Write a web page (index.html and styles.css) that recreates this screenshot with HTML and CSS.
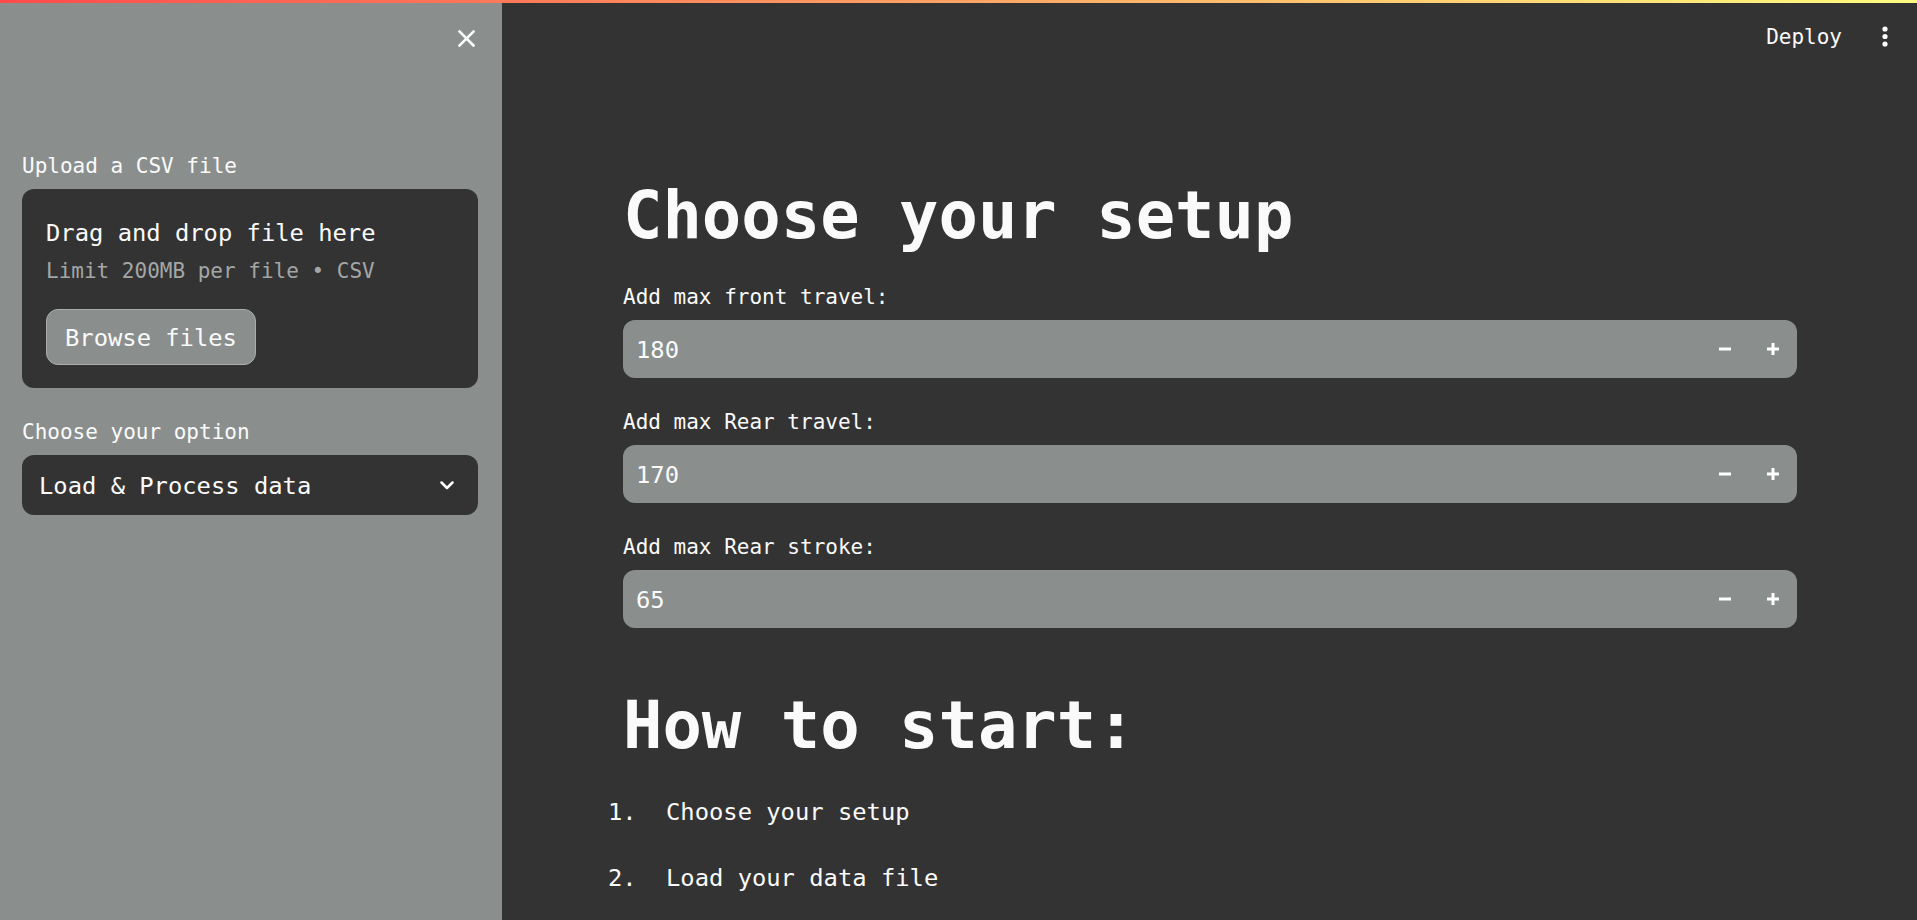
FILE: index.html
```html
<!DOCTYPE html>
<html lang="en">
<head>
<meta charset="utf-8">
<title>Choose your setup</title>
<link rel="stylesheet" href="styles.css">
</head>
<body>
<div class="decoration"></div>
<div class="app">
  <aside class="sidebar">
    <div class="sidebar-head">
      <svg class="close" width="17" height="17" viewBox="0 0 17 17"><path d="M1.5 1.5 L15.5 15.5 M15.5 1.5 L1.5 15.5" stroke="#fff" stroke-width="2.5" stroke-linecap="square" fill="none"/></svg>
    </div>
    <div class="field-label first">Upload a CSV file</div>
    <div class="dropzone">
      <div class="dz-title">Drag and drop file here</div>
      <div class="dz-sub">Limit 200MB per file • CSV</div>
      <button class="browse">Browse files</button>
    </div>
    <div class="field-label option">Choose your option</div>
    <div class="select">
      <span class="select-text">Load &amp; Process data</span>
      <svg width="14" height="9" viewBox="0 0 14 9"><path d="M1.5 1.5 L7 7 L12.5 1.5" stroke="#fff" stroke-width="2.5" fill="none" stroke-linecap="round" stroke-linejoin="round"/></svg>
    </div>
  </aside>
  <main class="main">
    <div class="toolbar">
      <button class="deploy">Deploy</button>
      <div class="kebab">
        <svg width="6" height="22" viewBox="0 0 6 22"><circle cx="3" cy="3" r="2.6" fill="#fff"/><circle cx="3" cy="10.5" r="2.6" fill="#fff"/><circle cx="3" cy="18" r="2.6" fill="#fff"/></svg>
      </div>
    </div>
    <div class="content">
      <h1>Choose your setup</h1>
      <div class="widget first">
        <div class="field-label">Add max front travel:</div>
        <div class="num-input">
          <span class="value">180</span>
          <span class="step"><svg width="12" height="12" viewBox="0 0 12 12"><rect x="0" y="4.5" width="12" height="3" fill="#fff"/></svg></span>
          <span class="step"><svg width="12" height="12" viewBox="0 0 12 12"><rect x="0" y="4.5" width="12" height="3" fill="#fff"/><rect x="4.5" y="0" width="3" height="12" fill="#fff"/></svg></span>
        </div>
      </div>
      <div class="widget">
        <div class="field-label">Add max Rear travel:</div>
        <div class="num-input">
          <span class="value">170</span>
          <span class="step"><svg width="12" height="12" viewBox="0 0 12 12"><rect x="0" y="4.5" width="12" height="3" fill="#fff"/></svg></span>
          <span class="step"><svg width="12" height="12" viewBox="0 0 12 12"><rect x="0" y="4.5" width="12" height="3" fill="#fff"/><rect x="4.5" y="0" width="3" height="12" fill="#fff"/></svg></span>
        </div>
      </div>
      <div class="widget">
        <div class="field-label">Add max Rear stroke:</div>
        <div class="num-input">
          <span class="value">65</span>
          <span class="step"><svg width="12" height="12" viewBox="0 0 12 12"><rect x="0" y="4.5" width="12" height="3" fill="#fff"/></svg></span>
          <span class="step"><svg width="12" height="12" viewBox="0 0 12 12"><rect x="0" y="4.5" width="12" height="3" fill="#fff"/><rect x="4.5" y="0" width="3" height="12" fill="#fff"/></svg></span>
        </div>
      </div>
      <h1 class="second">How to start:</h1>
      <ol class="steps">
        <li>Choose your setup</li>
        <li>Load your data file</li>
      </ol>
    </div>
  </main>
</div>
</body>
</html>
```

FILE: styles.css
```css
html, body {
  margin: 0;
  padding: 0;
}
body {
  width: 1917px;
  height: 920px;
  overflow: hidden;
  background: #333333;
  color: #fafafa;
  font-family: "DejaVu Sans Mono", "Liberation Mono", monospace;
}
.decoration {
  height: 3px;
  background: linear-gradient(90deg, #ff4b4b, #fffd80);
}
.app {
  display: flex;
  height: 917px;
}
.sidebar {
  width: 502px;
  flex: none;
  box-sizing: border-box;
  background: #8a8f8e;
  padding: 0 24px 0 22px;
}
.sidebar-head {
  height: 70px;
  display: flex;
  justify-content: flex-end;
  align-items: center;
  padding-right: 3px;
}
.field-label {
  font-size: 21px;
  line-height: 30px;
  margin-bottom: 8px;
  white-space: nowrap;
}
.field-label.first {
  margin-top: 78px;
  margin-bottom: 8px;
}
.field-label.option {
  margin-top: 29px;
}
.dropzone {
  background: #333333;
  border-radius: 12px;
  padding: 26px 24px 23px;
}
.dz-title {
  font-size: 23.8px;
  line-height: 36px;
}
.dz-sub {
  font-size: 21px;
  line-height: 30px;
  margin-top: 5px;
  color: #a4a6a6;
}
.browse {
  display: block;
  margin-top: 23px;
  height: 56px;
  padding: 2px 18px 0;
  background: #8a8f8e;
  border: 1px solid #a9adac;
  border-radius: 12px;
  color: #fafafa;
  font-family: inherit;
  font-size: 23.8px;
}
.select {
  height: 60px;
  box-sizing: border-box;
  background: #333333;
  border-radius: 12px;
  display: flex;
  align-items: center;
  justify-content: space-between;
  padding: 0 24px 0 17px;
  font-size: 23.8px;
}
.select-text {
  padding-top: 2px;
}
.main {
  flex: 1;
  display: flex;
  flex-direction: column;
  min-width: 0;
}
.toolbar {
  height: 68px;
  flex: none;
  display: flex;
  justify-content: flex-end;
  align-items: center;
  padding-right: 8px;
}
.deploy {
  background: none;
  border: none;
  color: #fafafa;
  font-family: inherit;
  font-size: 21px;
  padding: 0 19px;
  height: 48px;
}
.kebab {
  width: 48px;
  height: 48px;
  display: flex;
  align-items: center;
  justify-content: center;
}
.content {
  padding: 105px 120px 0 121px;
}
h1 {
  font-size: 65.5px;
  line-height: 1.2;
  font-weight: 700;
  margin: 0;
  white-space: nowrap;
}
h1.second {
  margin-top: 58px;
}
.widget {
  margin-top: 29px;
}
.widget.first {
  margin-top: 27px;
}
.num-input {
  height: 58px;
  background: #8a8f8e;
  border-radius: 12px;
  display: flex;
  align-items: center;
}
.num-input .value {
  flex: 1;
  padding: 2px 0 0 13px;
  font-size: 23.8px;
}
.step {
  width: 48px;
  height: 100%;
  display: flex;
  align-items: center;
  justify-content: center;
}
.steps {
  margin: 29px 0 0;
  padding-left: 28px;
  font-size: 23.8px;
}
.steps li {
  line-height: 38px;
  margin-bottom: 28px;
  padding-left: 15px;
}
```
